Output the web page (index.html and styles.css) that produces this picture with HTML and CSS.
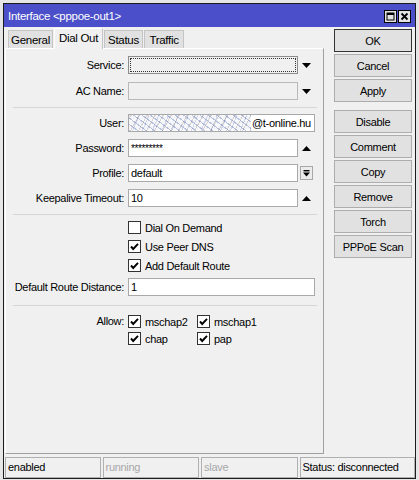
FILE: index.html
```html
<!DOCTYPE html>
<html>
<head>
<meta charset="utf-8">
<link rel="stylesheet" href="styles.css">
</head>
<body>
<div class="screen">
  <div class="win">
    <div class="title">
      <span class="title-text">Interface &lt;pppoe-out1&gt;</span>
      <div class="tbtns">
        <div class="tbtn"><svg width="11" height="11" viewBox="0 0 11 11"><rect x="2" y="2" width="7" height="7" fill="none" stroke="#000" stroke-width="1"/><rect x="2" y="2" width="7" height="2" fill="#000"/></svg></div>
        <div class="tbtn"><svg width="11" height="11" viewBox="0 0 11 11"><path d="M2.5 2.5 L8.5 8.5 M8.5 2.5 L2.5 8.5" stroke="#000" stroke-width="1.8"/></svg></div>
      </div>
    </div>
    <div class="main">
      <div class="left">
        <div class="tabs">
          <div class="tab t-general">General</div>
          <div class="tab sel t-dial">Dial Out</div>
          <div class="tab t-status">Status</div>
          <div class="tab t-traffic">Traffic</div>
        </div>
        <div class="panel">
          <div class="row r-service">
            <div class="lbl">Service:</div>
            <div class="field short disabled focus"><div class="dots"></div></div>
            <div class="arrow"><svg width="9" height="5" viewBox="0 0 9 5"><polygon points="0,0 9,0 4.5,5" fill="#000"/></svg></div>
          </div>
          <div class="row r-ac">
            <div class="lbl">AC Name:</div>
            <div class="field short disabled"></div>
            <div class="arrow"><svg width="9" height="5" viewBox="0 0 9 5"><polygon points="0,0 9,0 4.5,5" fill="#000"/></svg></div>
          </div>
          <div class="sep s1"></div>
          <div class="row r-user">
            <div class="lbl">User:</div>
            <div class="field long"><span class="noise"></span><span class="val">@t-online.hu</span></div>
          </div>
          <div class="row r-pass">
            <div class="lbl">Password:</div>
            <div class="field short"><span class="val pw">*********</span></div>
            <div class="arrow"><svg width="9" height="5" viewBox="0 0 9 5"><polygon points="0,5 9,5 4.5,0" fill="#000"/></svg></div>
          </div>
          <div class="row r-profile">
            <div class="lbl">Profile:</div>
            <div class="field short"><span class="val">default</span></div>
            <div class="arrow"><div class="minibtn"><svg width="9" height="9" viewBox="0 0 9 9"><rect x="1.5" y="1" width="6" height="1.4" fill="#000"/><polygon points="1,3.5 8,3.5 4.5,7.5" fill="#000"/></svg></div></div>
          </div>
          <div class="row r-keep">
            <div class="lbl">Keepalive Timeout:</div>
            <div class="field short"><span class="val">10</span></div>
            <div class="arrow"><svg width="9" height="5" viewBox="0 0 9 5"><polygon points="0,5 9,5 4.5,0" fill="#000"/></svg></div>
          </div>
          <div class="sep s2"></div>
          <div class="checks">
            <div class="crow"><span class="cb"></span><span>Dial On Demand</span></div>
            <div class="crow"><span class="cb on"><svg width="11" height="11" viewBox="0 0 11 11"><polyline points="2,5.5 4.2,8 9,2.8" fill="none" stroke="#000" stroke-width="1.9"/></svg></span><span>Use Peer DNS</span></div>
            <div class="crow"><span class="cb on"><svg width="11" height="11" viewBox="0 0 11 11"><polyline points="2,5.5 4.2,8 9,2.8" fill="none" stroke="#000" stroke-width="1.9"/></svg></span><span>Add Default Route</span></div>
          </div>
          <div class="row r-drd">
            <div class="lbl">Default Route Distance:</div>
            <div class="field long"><span class="val">1</span></div>
          </div>
          <div class="sep s3"></div>
          <div class="allow">
            <div class="lbl allow-lbl">Allow:</div>
            <div class="allow-grid">
              <div class="crow"><span class="cb on"><svg width="11" height="11" viewBox="0 0 11 11"><polyline points="2,5.5 4.2,8 9,2.8" fill="none" stroke="#000" stroke-width="1.9"/></svg></span><span>mschap2</span></div>
              <div class="crow"><span class="cb on"><svg width="11" height="11" viewBox="0 0 11 11"><polyline points="2,5.5 4.2,8 9,2.8" fill="none" stroke="#000" stroke-width="1.9"/></svg></span><span>mschap1</span></div>
              <div class="crow"><span class="cb on"><svg width="11" height="11" viewBox="0 0 11 11"><polyline points="2,5.5 4.2,8 9,2.8" fill="none" stroke="#000" stroke-width="1.9"/></svg></span><span>chap</span></div>
              <div class="crow"><span class="cb on"><svg width="11" height="11" viewBox="0 0 11 11"><polyline points="2,5.5 4.2,8 9,2.8" fill="none" stroke="#000" stroke-width="1.9"/></svg></span><span>pap</span></div>
            </div>
          </div>
        </div>
      </div>
      <div class="buttons">
        <div class="btn default">OK</div>
        <div class="btn">Cancel</div>
        <div class="btn gap">Apply</div>
        <div class="btn">Disable</div>
        <div class="btn">Comment</div>
        <div class="btn">Copy</div>
        <div class="btn">Remove</div>
        <div class="btn">Torch</div>
        <div class="btn">PPPoE Scan</div>
      </div>
    </div>
    <div class="status">
      <div class="sb sb1">enabled</div>
      <div class="sb sb2 dim">running</div>
      <div class="sb sb3 dim">slave</div>
      <div class="sb sb4">Status: disconnected</div>
    </div>
  </div>
</div>
</body>
</html>
```
FILE: styles.css
```css
html, body {
  margin: 0;
  padding: 0;
}
body {
  background: #e6e6e6;
  font-family: "Liberation Sans", Arial, sans-serif;
  font-size: 11px;
  letter-spacing: -0.3px;
  color: #000;
  width: 419px;
  height: 480px;
  overflow: hidden;
}
.screen {
  padding: 3px 0 0 3px;
}
.win {
  width: 413px;
  height: 476px;
  box-sizing: border-box;
  border: 1px solid #1c1c1c;
  background: #f0f0f0;
  display: flex;
  flex-direction: column;
}
.title {
  height: 23px;
  flex: none;
  background: #4b4fc9;
  color: #fff;
  display: flex;
  align-items: center;
  justify-content: space-between;
  padding: 0 4px 0 4px;
  font-size: 11.5px;
}
.title-text {
  padding-top: 1px;
}
.tbtns {
  display: flex;
  gap: 1px;
  margin-top: 1px;
}
.tbtn {
  width: 13px;
  height: 13px;
  box-sizing: border-box;
  border: 1px solid #000;
  background: #e4e4e4;
  display: flex;
  align-items: center;
  justify-content: center;
}
.tbtn svg {
  display: block;
}
.main {
  height: 430px;
  flex: none;
  display: flex;
}
.left {
  width: 319px;
  margin-left: 1px;
  display: flex;
  flex-direction: column;
}
.tabs {
  display: flex;
  align-items: flex-end;
  height: 20px;
  margin-top: 1px;
  padding-left: 3px;
}
.tab {
  height: 18px;
  box-sizing: border-box;
  border: 1px solid #c4c4c4;
  border-bottom: none;
  background: #e1e1e1;
  text-align: center;
  line-height: 18px;
  margin-right: 1px;
  font-size: 11.5px;
}
.tab.sel {
  height: 21px;
  margin-bottom: -1px;
  background: #f0f0f0;
  border-color: #ffffff #c4c4c4 #f0f0f0 #ffffff;
  position: relative;
  z-index: 1;
  line-height: 19px;
}
.t-general { width: 45px; }
.t-dial { width: 49px; }
.t-status { width: 39px; }
.t-traffic { width: 40px; }
.panel {
  height: 406px;
  box-sizing: border-box;
  border: 1px solid;
  border-color: #ffffff #a0a0a0 #a0a0a0 #ffffff;
  padding-top: 7px;
}
.row {
  display: flex;
  align-items: center;
  height: 18px;
}
.r-ac { margin-top: 8px; }
.r-user { margin-top: 6px; }
.r-pass { margin-top: 7px; }
.r-profile { margin-top: 7px; }
.r-keep { margin-top: 7px; }
.r-drd { margin-top: 3px; }
.lbl {
  width: 118px;
  text-align: right;
  flex: none;
  margin-right: 4px;
  color: #000;
}
.field {
  height: 18px;
  box-sizing: border-box;
  border: 1px solid #a9a9a9;
  background: #fff;
  display: flex;
  align-items: center;
  flex: none;
  overflow: hidden;
  white-space: nowrap;
}
.field.short { width: 170px; }
.field.long { width: 187px; }
.field.disabled {
  background: #f0f0f0;
  border-color: #b9b9b9;
}
.field.focus {
  border-color: #8c8c8c;
  padding: 1px;
}
.dots {
  width: 100%;
  height: 100%;
  box-sizing: border-box;
  border: 1px dotted #333;
}
.val {
  padding-left: 2px;
}
.pw {
  font-size: 10px;
  letter-spacing: -0.4px;
  padding-top: 1px;
}
.noise {
  display: block;
  width: 122px;
  height: 16px;
  flex: none;
  background-color: #f4f5f9;
  background-image:
    repeating-linear-gradient(37deg, rgba(60, 90, 170, 0.35) 0 1px, transparent 1px 5px),
    repeating-linear-gradient(-61deg, rgba(140, 120, 110, 0.3) 0 1px, transparent 1px 7px),
    repeating-linear-gradient(113deg, rgba(90, 110, 190, 0.25) 0 1px, transparent 1px 9px),
    repeating-linear-gradient(0deg, rgba(255, 255, 255, 0.6) 0 2px, transparent 2px 5px);
}
.field.long .noise + .val {
  padding-left: 1px;
}
.arrow {
  width: 17px;
  flex: none;
  display: flex;
  align-items: center;
  justify-content: center;
}
.arrow svg {
  display: block;
}
.minibtn {
  width: 13px;
  height: 14px;
  box-sizing: border-box;
  border: 1px solid #a8a8a8;
  background: #ececec;
  display: flex;
  align-items: center;
  justify-content: center;
}
.sep {
  height: 1px;
  width: 304px;
  margin-left: 7px;
  background: #d6d6d6;
}
.s1 { margin-top: 7px; }
.s2 { margin-top: 7px; }
.s3 { margin-top: 9px; }
.checks {
  margin-top: 3px;
  padding-left: 122px;
}
.crow {
  display: flex;
  align-items: center;
  height: 19px;
}
.cb {
  width: 13px;
  height: 13px;
  box-sizing: border-box;
  border: 1px solid #333;
  background: #fff;
  flex: none;
  margin-right: 4px;
  display: flex;
  align-items: center;
  justify-content: center;
}
.cb svg {
  display: block;
}
.allow {
  display: flex;
  margin-top: 7px;
}
.allow-lbl {
  line-height: 17px;
}
.allow-grid {
  display: grid;
  grid-template-columns: 69px auto;
}
.allow-grid .crow {
  height: 17px;
}
.buttons {
  margin-left: 10px;
  padding-top: 2px;
  width: 78px;
  display: flex;
  flex-direction: column;
}
.btn {
  height: 23px;
  box-sizing: border-box;
  border: 1px solid #adadad;
  background: #e1e1e1;
  display: flex;
  align-items: center;
  justify-content: center;
  margin-bottom: 2px;
}
.btn.default {
  border: 1px solid #333;
  box-shadow: inset 0 0 0 1px #e1e1e1;
}
.btn.gap {
  margin-bottom: 8px;
}
.status {
  height: 21px;
  flex: none;
  display: flex;
  gap: 2px;
  padding-left: 1px;
}
.sb {
  height: 21px;
  box-sizing: border-box;
  border: 1px solid #b0b0b0;
  padding-left: 2px;
  line-height: 19px;
  white-space: nowrap;
  overflow: hidden;
}
.sb1 { width: 96px; }
.sb2 { width: 97px; }
.sb3 { width: 97px; }
.sb4 { width: 116px; }
.dim { color: #a8a8a8; }
```
